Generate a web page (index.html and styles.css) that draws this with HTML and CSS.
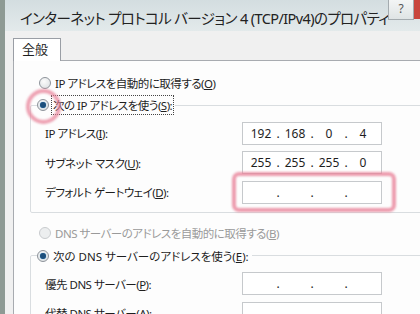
FILE: index.html
```html
<!DOCTYPE html>
<html lang="ja">
<head>
    <meta charset="UTF-8">
    <title>インターネット プロトコル バージョン 4 (TCP/IPv4)のプロパティ</title>
    <link rel="stylesheet" href="styles.css">
</head>
<body>
    <div class="window">
        <div class="titlebar">
            <div class="title">インターネット プロトコル バージョン 4 (TCP/IPv4)のプロパティ</div>
            <div class="help">?</div>
            <div class="close"></div>
        </div>

        <div class="dialog">
            <div class="tabs">
                <div class="tab active">全般</div>
            </div>

            <div class="panel">
                <div class="radio-row">
                    <span class="radio"></span>
                    <span>IP アドレスを自動的に取得する(<u>O</u>)</span>
                </div>

                <fieldset class="group">
                    <legend class="radio-row">
                        <span class="radio checked marked"></span>
                        <span class="focus">次の IP アドレスを使う(<u>S</u>):</span>
                    </legend>
                    <div class="field">
                        <label>IP アドレス(<u>I</u>):</label>
                        <div class="ip">
                            <span class="seg">192</span><span class="dot">.</span>
                            <span class="seg">168</span><span class="dot">.</span>
                            <span class="seg">0</span><span class="dot">.</span>
                            <span class="seg">4</span>
                        </div>
                    </div>
                    <div class="field">
                        <label>サブネット マスク(<u>U</u>):</label>
                        <div class="ip">
                            <span class="seg">255</span><span class="dot">.</span>
                            <span class="seg">255</span><span class="dot">.</span>
                            <span class="seg">255</span><span class="dot">.</span>
                            <span class="seg">0</span>
                        </div>
                    </div>
                    <div class="field">
                        <label>デフォルト ゲートウェイ(<u>D</u>):</label>
                        <div class="ip marked-box">
                            <span class="seg"></span><span class="dot">.</span>
                            <span class="seg"></span><span class="dot">.</span>
                            <span class="seg"></span><span class="dot">.</span>
                            <span class="seg"></span>
                        </div>
                    </div>
                </fieldset>

                <div class="radio-row disabled dns-auto">
                    <span class="radio"></span>
                    <span>DNS サーバーのアドレスを自動的に取得する(<u>B</u>)</span>
                </div>

                <fieldset class="group dns">
                    <legend class="radio-row">
                        <span class="radio checked"></span>
                        <span>次の DNS サーバーのアドレスを使う(<u>E</u>):</span>
                    </legend>
                    <div class="field">
                        <label>優先 DNS サーバー(<u>P</u>):</label>
                        <div class="ip">
                            <span class="seg"></span><span class="dot">.</span>
                            <span class="seg"></span><span class="dot">.</span>
                            <span class="seg"></span><span class="dot">.</span>
                            <span class="seg"></span>
                        </div>
                    </div>
                    <div class="field">
                        <label>代替 DNS サーバー(<u>A</u>):</label>
                        <div class="ip">
                            <span class="seg"></span><span class="dot">.</span>
                            <span class="seg"></span><span class="dot">.</span>
                            <span class="seg"></span><span class="dot">.</span>
                            <span class="seg"></span>
                        </div>
                    </div>
                </fieldset>
            </div>
        </div>
    </div>
</body>
</html>
```

FILE: styles.css
```css
body {
    margin: 0;
    width: 420px;
    height: 314px;
    overflow: hidden;
    background-color: #f0f0f0;
    font-family: "Noto Sans", "Noto Sans CJK JP", sans-serif;
    font-feature-settings: "palt";
    color: #1e1e1e;
}

.window {
    width: 470px;
    height: 314px;
    display: flex;
    flex-direction: column;
    border-left: 5px solid #8e9a94;
    box-sizing: border-box;
}

/* Title bar */
.titlebar {
    height: 31px;
    flex-shrink: 0;
    display: flex;
    align-items: flex-start;
    background: linear-gradient(#d3dde0, #e3eaeb);
}

.title {
    font-size: 14.5px;
    line-height: 16px;
    margin: 10px 0 0 15px;
    letter-spacing: -0.6px;
    color: #222;
    width: 368px;
    white-space: nowrap;
}

.help {
    width: 24px;
    height: 19px;
    border: 1px solid #a4abaf;
    border-top: none;
    background: linear-gradient(#f3f5f5, #dfe4e5);
    font-size: 12px;
    text-align: center;
    line-height: 18px;
    color: #555;
}

.close {
    width: 40px;
    height: 19px;
    background: #c9463d;
}

/* Dialog body */
.dialog {
    flex: 1;
    padding: 6px 0 0 8px;
    display: flex;
    flex-direction: column;
}

.tabs {
    display: flex;
    height: 23px;
}

.tab {
    width: 48px;
    font-size: 13px;
    line-height: 21px;
    padding-left: 8px;
    box-sizing: border-box;
    background: #fff;
    border: 1px solid #9a9ea5;
    border-bottom: none;
    position: relative;
    top: 1px;
}

.panel {
    flex: 1;
    background: #fdfdfd;
    border: 1px solid #a8abb0;
    padding: 12px 0 0 16px;
    font-size: 11.5px;
    letter-spacing: -0.5px;
}

.radio-row {
    display: flex;
    align-items: center;
    height: 20px;
    gap: 4px;
    padding-left: 9px;
}

.radio {
    width: 12px;
    height: 12px;
    border-radius: 50%;
    border: 1px solid #8d939a;
    background: radial-gradient(circle at 40% 35%, #fbfbfb, #d8dcdf);
    box-sizing: border-box;
    position: relative;
    flex-shrink: 0;
}

.radio.checked::after {
    content: "";
    position: absolute;
    left: 2px;
    top: 2px;
    width: 6px;
    height: 6px;
    border-radius: 50%;
    background: #1d4f7c;
    box-shadow: 0 0 1px #4aa3df;
}

/* pink marker around the selected radio */
.radio.marked::before {
    content: "";
    position: absolute;
    left: -12px;
    top: -11px;
    width: 27px;
    height: 27px;
    border-radius: 50%;
    border: 4px solid rgba(232, 130, 152, 0.75);
    filter: blur(0.8px);
}

.focus {
    outline: 1px dotted #444;
    outline-offset: 1px;
}

.disabled {
    color: #9a9a9a;
}

.disabled .radio {
    border-color: #c8cbce;
    background: #eceeef;
}

.group {
    margin: 2px 0 0 0;
    padding: 0 0 8px 14px;
    border: 1px solid #d9dde0;
    border-radius: 2px;
    min-width: 0;
}

.group legend {
    margin-left: -8px;
    padding: 0 3px 0 0;
}

.dns legend {
    letter-spacing: 0;
}

.field {
    display: grid;
    grid-template-columns: 197px 140px;
    align-items: center;
    height: 23px;
    margin-top: 6.5px;
}

.field label {
    white-space: nowrap;
}

.ip {
    height: 23px;
    box-sizing: border-box;
    border: 1px solid #c6c9cc;
    background: #fff;
    display: flex;
    align-items: center;
    padding-left: 4px;
    font-size: 12px;
    letter-spacing: 0;
    position: relative;
}

.seg {
    width: 28px;
    text-align: center;
}

.dot {
    width: 6px;
    text-align: center;
}

/* pink marker around the gateway box */
.marked-box::before {
    content: "";
    position: absolute;
    left: -11px;
    top: -10px;
    right: -15px;
    bottom: -9px;
    border: 4px solid rgba(232, 130, 152, 0.8);
    border-radius: 7px;
    filter: blur(0.8px);
}

.dns-auto {
    margin-top: 10px;
}

.dns {
    margin-top: 3px;
}
```
